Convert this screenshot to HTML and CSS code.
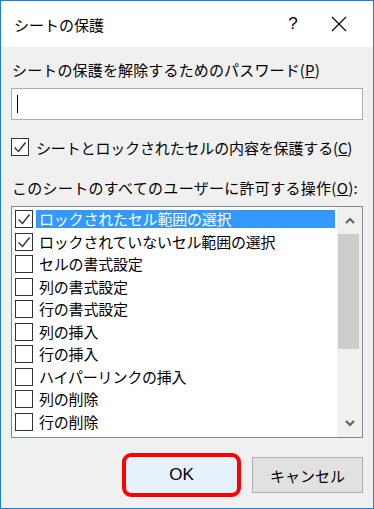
FILE: index.html
```html
<!DOCTYPE html>
<html lang="ja">
<head>
  <meta charset="UTF-8">
  <meta name="viewport" content="width=device-width,initial-scale=1">
  <title>シートの保護</title>
  <link rel="stylesheet" href="styles.css">
</head>
<body>

<div class="dialog">
  <div class="titlebar">
    <div class="title">シートの保護</div>
    <div class="tb-btn help">?</div>
    <div class="tb-btn close">
      <svg width="16" height="16" viewBox="0 0 16 16"><path d="M1 1L15 15M15 1L1 15" stroke="#000" stroke-width="1.2" fill="none"/></svg>
    </div>
  </div>

  <div class="content">
    <div class="label">シートの保護を解除するためのパスワード(<u>P</u>)</div>
    <div class="password"><span class="caret"></span></div>

    <div class="check-row">
      <span class="cb checked"><svg width="16" height="16" viewBox="0 0 16 16"><path d="M2.5 8.5L6.5 12.5L13.5 3.5" stroke="#333" stroke-width="1.4" fill="none"/></svg></span>
      <span>シートとロックされたセルの内容を保護する(<u>C</u>)</span>
    </div>

    <div class="label ops">このシートのすべてのユーザーに許可する操作(<u>O</u>):</div>

    <div class="listbox">
      <ul class="items">
        <li class="selected"><span class="cb"><svg width="16" height="16" viewBox="0 0 16 16"><path d="M2.5 8.5L6.5 12.5L13.5 3.5" stroke="#333" stroke-width="1.4" fill="none"/></svg></span><span class="txt">ロックされたセル範囲の選択</span></li>
        <li><span class="cb"><svg width="16" height="16" viewBox="0 0 16 16"><path d="M2.5 8.5L6.5 12.5L13.5 3.5" stroke="#333" stroke-width="1.4" fill="none"/></svg></span><span class="txt">ロックされていないセル範囲の選択</span></li>
        <li><span class="cb"></span><span class="txt">セルの書式設定</span></li>
        <li><span class="cb"></span><span class="txt">列の書式設定</span></li>
        <li><span class="cb"></span><span class="txt">行の書式設定</span></li>
        <li><span class="cb"></span><span class="txt">列の挿入</span></li>
        <li><span class="cb"></span><span class="txt">行の挿入</span></li>
        <li><span class="cb"></span><span class="txt">ハイパーリンクの挿入</span></li>
        <li><span class="cb"></span><span class="txt">列の削除</span></li>
        <li><span class="cb"></span><span class="txt">行の削除</span></li>
      </ul>
      <div class="scrollbar">
        <div class="arrow">
          <svg width="10" height="8" viewBox="0 0 10 8"><path d="M1 6L5 2L9 6" stroke="#606060" stroke-width="2" fill="none"/></svg>
        </div>
        <div class="track"><div class="thumb"></div></div>
        <div class="arrow">
          <svg width="10" height="8" viewBox="0 0 10 8"><path d="M1 2L5 6L9 2" stroke="#606060" stroke-width="2" fill="none"/></svg>
        </div>
      </div>
    </div>

    <div class="buttons">
      <button class="btn ok">OK</button>
      <button class="btn">キャンセル</button>
    </div>
  </div>
</div>

</body>
</html>
```

FILE: styles.css
```css
html, body {
  margin: 0;
  padding: 0;
}

body {
  font-family: "Noto Sans CJK JP", "Noto Sans", sans-serif;
  font-size: 15px;
  color: #000;
  background: #f0f0f0;
}

.dialog {
  width: 374px;
  height: 509px;
  box-sizing: border-box;
  border: 1px solid #1c7fd6;
  display: flex;
  flex-direction: column;
}

.titlebar {
  height: 46px;
  background: #fff;
  display: flex;
  align-items: center;
}

.title {
  flex: 1;
  padding-left: 13px;
}

.tb-btn {
  width: 46px;
  height: 46px;
  display: flex;
  align-items: center;
  justify-content: center;
}

.help {
  font-family: "Liberation Sans", sans-serif;
  font-size: 17px;
}

.close {
  margin-right: 11px;
}

.content {
  flex: 1;
  background: #f0f0f0;
  padding: 13px 10px 0 10px;
}

.label {
  line-height: 20px;
  letter-spacing: 0.15px;
  padding-left: 1px;
}

.password {
  margin-top: 8px;
  height: 32px;
  box-sizing: border-box;
  border: 1px solid #adadad;
  background: #fff;
  display: flex;
  align-items: center;
  padding-left: 5px;
}

.caret {
  width: 1px;
  height: 18px;
  background: #000;
}

.check-row {
  margin-top: 17px;
  height: 20px;
  display: flex;
  align-items: center;
  gap: 7px;
  letter-spacing: -0.15px;
}

.cb {
  width: 18px;
  height: 18px;
  box-sizing: border-box;
  border: 1px solid #333;
  background: #fff;
  display: inline-flex;
  align-items: center;
  justify-content: center;
  flex: none;
}

.ops {
  margin-top: 21px;
  letter-spacing: 0.3px;
}

.listbox {
  margin-top: 8px;
  height: 232px;
  box-sizing: border-box;
  border: 1px solid #828790;
  background: #fff;
  display: flex;
}

.items {
  list-style: none;
  margin: 0;
  padding: 3px 0 0 3px;
  flex: 1;
}

.items li {
  height: 22.5px;
  display: flex;
  align-items: flex-start;
}

.items .txt {
  margin-left: 3px;
  padding: 0 4px 0 3px;
  line-height: 18px;
  height: 18px;
  letter-spacing: -0.2px;
}

.items li.selected .txt {
  flex: 1;
  margin-right: 2px;
  background: #3399ff;
  color: #fff;
}

.scrollbar {
  width: 25px;
  background: #f0f0f0;
  display: flex;
  flex-direction: column;
  padding: 1px 0 1px 0;
}

.arrow {
  height: 26px;
  display: flex;
  align-items: center;
  justify-content: center;
}

.track {
  flex: 1;
}

.thumb {
  margin: 0 3px 0 1px;
  height: 115px;
  background: #cdcdcd;
}

.buttons {
  margin-top: 19px;
  display: flex;
  justify-content: flex-end;
  gap: 15px;
}

.btn {
  width: 111px;
  height: 36px;
  font-family: "Noto Sans CJK JP", "Noto Sans", sans-serif;
  font-size: 15px;
  color: #000;
  background: #e1e1e1;
  border: 1px solid #adadad;
  padding: 0;
}

.btn.ok {
  background: #e5f1fb;
  border: 1px solid #e5f1fb;
  outline: 4px solid #ff0000;
  outline-offset: 0;
  border-radius: 5px;
  font-family: "Liberation Sans", sans-serif;
  font-size: 17px;
}
```
